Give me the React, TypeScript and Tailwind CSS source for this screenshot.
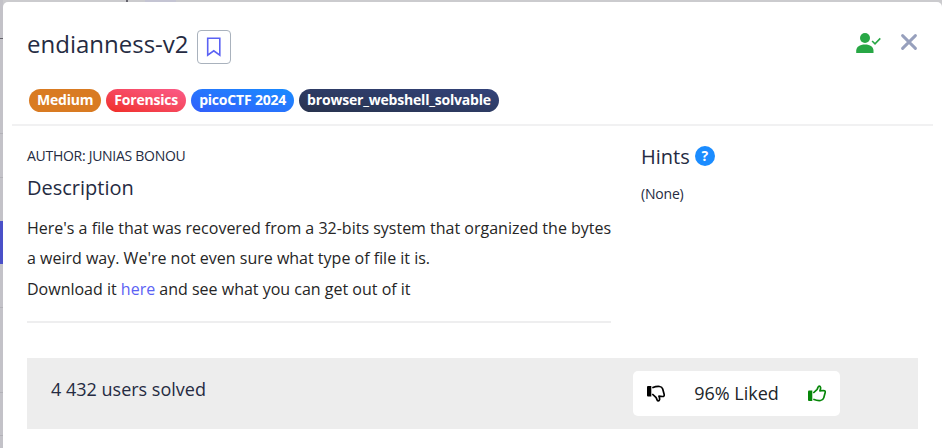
const badge = "flex h-[23px] items-center rounded-full px-2 text-sm tracking-[-0.2px] font-bold text-white whitespace-nowrap";

function Bookmark() {
  return (
    <svg width="20" height="20" viewBox="0 0 20 20" fill="none" stroke="#5b62f4" strokeWidth="1.6">
      <path d="M3.7 1.2h12.1v16.9L9.75 13.8 3.7 18.1z" />
    </svg>
  );
}

function UserCheck() {
  return (
    <svg width="26" height="22" viewBox="0 0 26 22" fill="#28a745">
      <circle cx="9" cy="6" r="5" />
      <path d="M.2 21v-2.2c0-4 3.5-6.3 8.8-6.3s8.5 2.3 8.5 6.3V21z" />
      <path d="M16.1 9l2.9 2.8 5.3-5.4" fill="none" stroke="#28a745" strokeWidth="1.6" />
    </svg>
  );
}

function Thumb({ down = false }: { down?: boolean }) {
  return (
    <svg width="18" height="17" viewBox="0 0 18 17" fill="none" stroke="currentColor" className={down ? "-scale-y-100" : ""}>
      <path d="M0 6.5q0-1 1-1h3.3v10.5H1q-1 0-1-1z" fill="currentColor" stroke="none" />
      <path d="M5.3 8 8.9 4.6c1-1 .9-3.4 2.2-3.5 1.5-.1 2.1 1.9.8 4.7l3.7-.3c1.2 0 1.9.9 1.6 2l-1.5 5.4c-.4 1.6-1.6 2.4-3.2 2.6-2.8.4-4.7-.3-7.2-1.3" strokeWidth="1.7" strokeLinejoin="round" />
    </svg>
  );
}

export default function App() {
  return (
    <div className="flex h-[448px] w-[942px] overflow-hidden bg-[#cbcbce] font-['Open_Sans',sans-serif] text-[#252b42]">
      <aside className="flex w-[3px] shrink-0 flex-col bg-[#c3c2c8]">
        <div className="h-[39px] border-b border-[#64636c]" />
        <div className="h-[95px] border-b border-[#b3b2b8]" />
        <div className="h-[44px] border-b border-[#b3b2b8]" />
        <div className="mt-[43px] h-[43px] bg-[#4a50c8]" />
        <div className="h-[44px] border-b border-[#b3b2b8]" />
        <div className="h-[85px] border-b border-[#b3b2b8]" />
        <div className="h-[43px] border-b border-[#b3b2b8]" />
      </aside>
      <main className="flex min-w-0 flex-1 flex-col">
        <div className="flex h-[1.5px] shrink-0">
          <div className="ml-[123px] w-[2px] bg-[#64636c]" />
          <div className="ml-[17px] w-[31px] bg-[#c4c4d3]" />
        </div>
        <section className="flex flex-1 flex-col rounded-t-[5px] bg-white">
          <header className="mx-[9px] h-[124.5px] shrink-0 border-b-2 border-[#f1f1f2] px-[15px]">
            <div className="flex pt-[28px]">
              <h1 className="mt-[-1px] text-2xl leading-[30px]">endianness-v2</h1>
              <button className="ml-[8px] flex h-[34px] w-[34px] items-center justify-center rounded-[4px] border border-[#a9b2bd]"><Bookmark /></button>
              <div className="ml-auto mr-[1px] flex gap-[19px]">
                <div className="mt-[2px]"><UserCheck /></div>
                <svg className="mt-[4px]" width="16" height="16" viewBox="0 0 16 16" stroke="#97a0bd" strokeWidth="2.9" strokeLinecap="round"><path d="m1.6 1.6 12.8 12.8M14.4 1.6 1.6 14.4" /></svg>
              </div>
            </div>
            <div className="ml-[2px] mt-[25px] flex gap-[5px]">
              <span className={`${badge} bg-[#d97b22]`}>Medium</span>
              <span className={`${badge} bg-linear-to-tr from-[#f02c22] to-[#fb5b88]`}>Forensics</span>
              <span className={`${badge} bg-linear-to-tr from-[#315efb] to-[#168bff]`}>picoCTF 2024</span>
              <span className={`${badge} bg-linear-to-tr from-[#28334e] to-[#33437a]`}>browser_webshell_solvable</span>
            </div>
          </header>
          <div className="ml-6 flex h-[231.5px] shrink-0">
            <article className="w-[584px] pt-[19px]">
              <p className="text-sm tracking-[-0.28px] leading-[22px]">AUTHOR: JUNIAS BONOU</p>
              <h2 className="mt-[7px] text-xl leading-[28px]">Description</h2>
              <div className="mt-[11px] whitespace-nowrap text-base leading-[30.4px] text-[#262626]">
                <p>Here's a file that was recovered from a 32-bits system that organized the bytes<br />a weird way. We're not even sure what type of file it is.</p>
                <p>Download it <a className="text-[#5b62f4]">here</a> and see what you can get out of it</p>
              </div>
              <div className="mt-[17px] h-[2px] bg-[#eeeeef]" />
            </article>
            <aside className="ml-[30px] pt-[17px]">
              <div className="flex items-start gap-[5px]">
                <h2 className="text-xl leading-[28px]">Hints</h2>
                <span className="mt-[3px] flex size-5 items-center justify-center rounded-full bg-[#1b8cff] text-sm font-bold leading-none text-white">?</span>
              </div>
              <p className="mt-[12px] text-sm tracking-[-0.2px] leading-[21px]">(None)</p>
            </aside>
          </div>
          <footer className="ml-6 mr-6 flex h-[71px] shrink-0 bg-[#ededed] pl-6">
            <p className="mt-[16px] text-lg leading-[30px]">4 432 users solved</p>
            <div className="ml-auto mr-[78px] mt-[13px] flex h-[45px] w-[207px] items-center justify-between rounded-[5px] bg-white px-[14px] text-lg text-[#212529]">
              <span className="text-black"><Thumb down /></span>
              <span>96% Liked</span>
              <span className="text-[#078609]"><Thumb /></span>
            </div>
          </footer>
        </section>
      </main>
    </div>
  );
}
